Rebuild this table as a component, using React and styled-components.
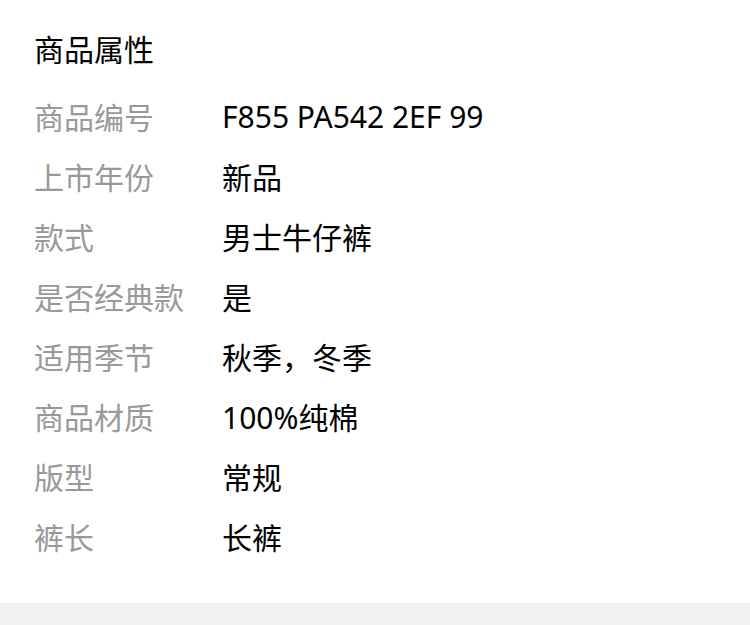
import React from 'react';
import styled, { createGlobalStyle } from 'styled-components';

const GlobalStyle = createGlobalStyle`
  html, body {
    margin: 0;
    padding: 0;
    background: #fff;
  }
  body {
    font-family: "Noto Sans", "Noto Sans CJK SC", sans-serif;
  }
`;

const Page = styled.div`
  width: 750px;
  background: #fff;
`;

const Section = styled.section`
  padding: 20px 0 37px 34px;
`;

const Title = styled.h2`
  margin: 0 0 6px;
  font-size: 30px;
  font-weight: 400;
  line-height: 60px;
  color: #000;
`;

const Row = styled.div`
  display: flex;
  align-items: center;
  height: 60px;
  font-size: 30px;
`;

const Label = styled.span`
  width: 188px;
  flex-shrink: 0;
  color: #999;
`;

const Value = styled.span`
  color: #000;
`;

const Footer = styled.div`
  height: 22px;
  background: #f2f2f2;
`;

const attrs = [
  ['商品编号', 'F855 PA542 2EF 99'],
  ['上市年份', '新品'],
  ['款式', '男士牛仔裤'],
  ['是否经典款', '是'],
  ['适用季节', '秋季，冬季'],
  ['商品材质', '100%纯棉'],
  ['版型', '常规'],
  ['裤长', '长裤'],
];

const App = () => (
  <>
    <GlobalStyle />
    <Page>
      <Section>
        <Title>商品属性</Title>
        {attrs.map(([label, value]) => (
          <Row key={label}>
            <Label>{label}</Label>
            <Value>{value}</Value>
          </Row>
        ))}
      </Section>
      <Footer />
    </Page>
  </>
);

export default App;
